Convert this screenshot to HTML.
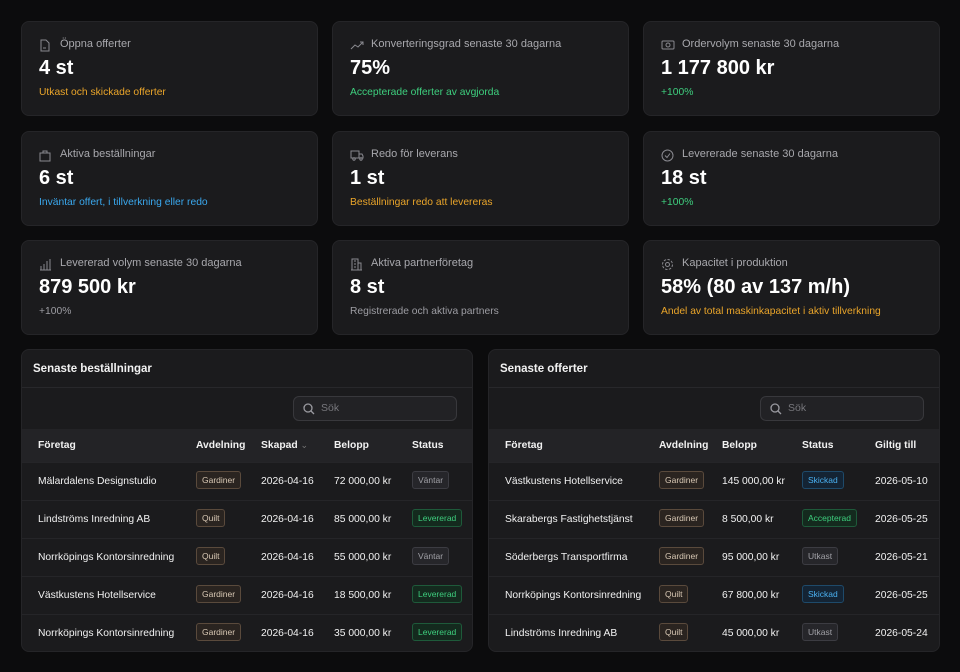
<!DOCTYPE html>
<html><head><meta charset="utf-8"><style>
*{box-sizing:border-box;margin:0;padding:0}
body{width:960px;height:672px;background:#0c0c0d;font-family:"Liberation Sans",sans-serif;color:#f2f2f2;position:relative;overflow:hidden}
.card{position:absolute;width:297px;height:95px;background:#1b1b1d;border:1px solid #252528;border-radius:8px}
.card .lab{position:absolute;left:38px;top:16px;font-size:11px;color:#a8a8ad}
.card svg{position:absolute;left:17px;top:17px}
.card .val{position:absolute;left:17px;top:35px;font-size:20px;font-weight:bold;color:#fff}
.card .sub{position:absolute;left:17px;top:65px;font-size:10.3px}
.y{color:#eaa52a}.g{color:#3ecf7e}.b{color:#3aa8ee}.gr{color:#9d9da3}
.tbl{position:absolute;top:349px;width:452px;height:303px;background:#1b1b1d;border:1px solid #252528;border-radius:8px;overflow:hidden}
.tbl .h{height:38px;line-height:38px;padding-left:11px;font-size:11.5px;font-weight:bold;border-bottom:1px solid #28282b}
.tbl .s{height:41px;position:relative}
.search{position:absolute;right:15px;top:8px;width:164px;height:25px;border:1px solid #38383c;border-radius:6px;background:#222225;font-size:10.5px;color:#77777c;line-height:23px;padding-left:27px}
.search svg{position:absolute;left:9px;top:6px}
.row{height:38px;border-top:1px solid #252528;position:relative;font-size:10.3px}
.th{background:#232326;font-weight:bold;height:33px;border-top:none}
.row>span{position:absolute;top:0;height:100%;display:flex;align-items:center;white-space:nowrap}
.tag{font-size:8.5px;padding:3px 5px;border-radius:3px;border:1px solid;line-height:10px;font-style:normal;position:relative;top:-2px}
.dep{color:#d8c8b4;background:#2a2420;border-color:#5a4a3c}
.wait{color:#a0a0a6;background:#26262a;border-color:#3c3c42}
.done{color:#3ecf7e;background:#142a1e;border-color:#1e5a3a}
.sent{color:#4ab0f0;background:#142434;border-color:#1e4a6a}
</style></head><body>

<div class="card" style="left:21px;top:21px"><svg width="12" height="13" viewBox="0 0 12 13" fill="none" stroke="#8a8a90"><path d="M2 1h5l3 3v8H2z"/><path d="M4 9h3"/></svg><div class="lab">Öppna offerter</div><div class="val">4 st</div><div class="sub y">Utkast och skickade offerter</div></div>
<div class="card" style="left:332px;top:21px"><svg width="14" height="12" viewBox="0 0 14 12" fill="none" stroke="#8a8a90"><path d="M1 10l4-4 3 2 5-5M10 3h3v3"/></svg><div class="lab">Konverteringsgrad senaste 30 dagarna</div><div class="val">75%</div><div class="sub g">Accepterade offerter av avgjorda</div></div>
<div class="card" style="left:643px;top:21px"><svg width="14" height="12" viewBox="0 0 14 12" fill="none" stroke="#8a8a90"><rect x="1" y="2" width="12" height="8" rx="1"/><circle cx="7" cy="6" r="2"/></svg><div class="lab">Ordervolym senaste 30 dagarna</div><div class="val">1 177 800 kr</div><div class="sub g">+100%</div></div>

<div class="card" style="left:21px;top:131px"><svg width="12" height="13" viewBox="0 0 12 13" fill="none" stroke="#8a8a90"><path d="M1 4h10v8H1zM4 4V2h4v2"/></svg><div class="lab">Aktiva beställningar</div><div class="val">6 st</div><div class="sub b">Inväntar offert, i tillverkning eller redo</div></div>
<div class="card" style="left:332px;top:131px"><svg width="14" height="12" viewBox="0 0 14 12" fill="none" stroke="#8a8a90"><path d="M1 2h8v7H1zM9 5h3l1 2v2H9"/><circle cx="4" cy="10" r="1.2"/><circle cx="11" cy="10" r="1.2"/></svg><div class="lab">Redo för leverans</div><div class="val">1 st</div><div class="sub y">Beställningar redo att levereras</div></div>
<div class="card" style="left:643px;top:131px"><svg width="13" height="13" viewBox="0 0 13 13" fill="none" stroke="#8a8a90"><circle cx="6.5" cy="6.5" r="5.5"/><path d="M4 6.5l2 2 3-4"/></svg><div class="lab">Levererade senaste 30 dagarna</div><div class="val">18 st</div><div class="sub g">+100%</div></div>

<div class="card" style="left:21px;top:240px"><svg width="13" height="13" viewBox="0 0 13 13" fill="none" stroke="#8a8a90"><path d="M1 12h11M2 8v4M5 6v6M8 3v9M11 1v11"/></svg><div class="lab">Levererad volym senaste 30 dagarna</div><div class="val">879 500 kr</div><div class="sub gr">+100%</div></div>
<div class="card" style="left:332px;top:240px"><svg width="13" height="13" viewBox="0 0 13 13" fill="none" stroke="#8a8a90"><path d="M1 12h11M2 12V1h6v11M8 5h3v7M4 3h2M4 6h2M4 9h2"/></svg><div class="lab">Aktiva partnerföretag</div><div class="val">8 st</div><div class="sub gr">Registrerade och aktiva partners</div></div>
<div class="card" style="left:643px;top:240px"><svg width="13" height="13" viewBox="0 0 13 13" fill="none" stroke="#8a8a90"><circle cx="6.5" cy="6.5" r="2"/><circle cx="6.5" cy="6.5" r="5" stroke-dasharray="2.5 1.4"/></svg><div class="lab">Kapacitet i produktion</div><div class="val">58% (80 av 137 m/h)</div><div class="sub y">Andel av total maskinkapacitet i aktiv tillverkning</div></div>

<div class="tbl" style="left:21px">
<div class="h">Senaste beställningar</div>
<div class="s"><div class="search"><svg width="12" height="12" viewBox="0 0 12 12" fill="none" stroke="#9a9aa0" stroke-width="1.3"><circle cx="5" cy="5" r="4"/><path d="M8 8l3 3"/></svg>Sök</div></div>
<div class="row th"><span style="left:16px">Företag</span><span style="left:174px">Avdelning</span><span style="left:239px">Skapad&nbsp;<b style="color:#777;font-weight:normal;font-size:9px">⌄</b></span><span style="left:312px">Belopp</span><span style="left:390px">Status</span></div>
<div class="row"><span style="left:16px">Mälardalens Designstudio</span><span style="left:174px"><i class="tag dep">Gardiner</i></span><span style="left:239px">2026-04-16</span><span style="left:312px">72 000,00 kr</span><span style="left:390px"><i class="tag wait">Väntar</i></span></div>
<div class="row"><span style="left:16px">Lindströms Inredning AB</span><span style="left:174px"><i class="tag dep">Quilt</i></span><span style="left:239px">2026-04-16</span><span style="left:312px">85 000,00 kr</span><span style="left:390px"><i class="tag done">Levererad</i></span></div>
<div class="row"><span style="left:16px">Norrköpings Kontorsinredning</span><span style="left:174px"><i class="tag dep">Quilt</i></span><span style="left:239px">2026-04-16</span><span style="left:312px">55 000,00 kr</span><span style="left:390px"><i class="tag wait">Väntar</i></span></div>
<div class="row"><span style="left:16px">Västkustens Hotellservice</span><span style="left:174px"><i class="tag dep">Gardiner</i></span><span style="left:239px">2026-04-16</span><span style="left:312px">18 500,00 kr</span><span style="left:390px"><i class="tag done">Levererad</i></span></div>
<div class="row"><span style="left:16px">Norrköpings Kontorsinredning</span><span style="left:174px"><i class="tag dep">Gardiner</i></span><span style="left:239px">2026-04-16</span><span style="left:312px">35 000,00 kr</span><span style="left:390px"><i class="tag done">Levererad</i></span></div>
</div>

<div class="tbl" style="left:488px">
<div class="h">Senaste offerter</div>
<div class="s"><div class="search"><svg width="12" height="12" viewBox="0 0 12 12" fill="none" stroke="#9a9aa0" stroke-width="1.3"><circle cx="5" cy="5" r="4"/><path d="M8 8l3 3"/></svg>Sök</div></div>
<div class="row th"><span style="left:16px">Företag</span><span style="left:170px">Avdelning</span><span style="left:233px">Belopp</span><span style="left:313px">Status</span><span style="left:386px">Giltig till</span></div>
<div class="row"><span style="left:16px">Västkustens Hotellservice</span><span style="left:170px"><i class="tag dep">Gardiner</i></span><span style="left:233px">145 000,00 kr</span><span style="left:313px"><i class="tag sent">Skickad</i></span><span style="left:386px">2026-05-10</span></div>
<div class="row"><span style="left:16px">Skarabergs Fastighetstjänst</span><span style="left:170px"><i class="tag dep">Gardiner</i></span><span style="left:233px">8 500,00 kr</span><span style="left:313px"><i class="tag done">Accepterad</i></span><span style="left:386px">2026-05-25</span></div>
<div class="row"><span style="left:16px">Söderbergs Transportfirma</span><span style="left:170px"><i class="tag dep">Gardiner</i></span><span style="left:233px">95 000,00 kr</span><span style="left:313px"><i class="tag wait">Utkast</i></span><span style="left:386px">2026-05-21</span></div>
<div class="row"><span style="left:16px">Norrköpings Kontorsinredning</span><span style="left:170px"><i class="tag dep">Quilt</i></span><span style="left:233px">67 800,00 kr</span><span style="left:313px"><i class="tag sent">Skickad</i></span><span style="left:386px">2026-05-25</span></div>
<div class="row"><span style="left:16px">Lindströms Inredning AB</span><span style="left:170px"><i class="tag dep">Quilt</i></span><span style="left:233px">45 000,00 kr</span><span style="left:313px"><i class="tag wait">Utkast</i></span><span style="left:386px">2026-05-24</span></div>
</div>
</body></html>
